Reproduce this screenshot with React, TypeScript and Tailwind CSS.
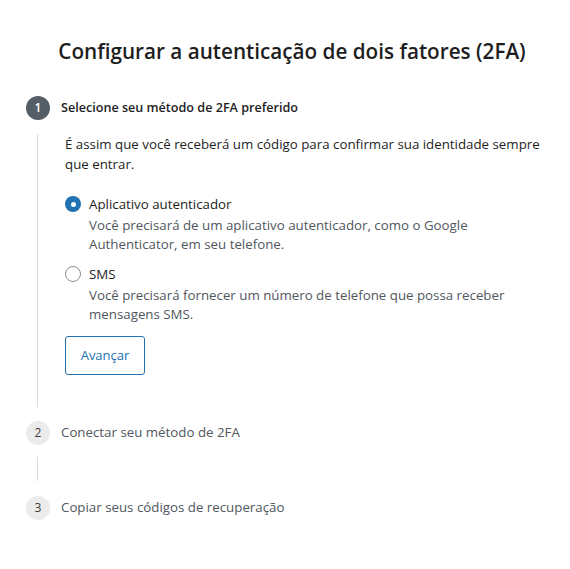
import React, { useState } from 'react';

const FONT = { fontFamily: '"Open Sans", "Noto Sans", Arial, sans-serif' };

const METHODS = [
  {
    id: 'app',
    label: 'Aplicativo autenticador',
    desc: 'Você precisará de um aplicativo autenticador, como o Google Authenticator, em seu telefone.',
  },
  {
    id: 'sms',
    label: 'SMS',
    desc: 'Você precisará fornecer um número de telefone que possa receber mensagens SMS.',
  },
];

function StepBadge({ n, active }: { n: number; active?: boolean }) {
  return (
    <div
      className={
        active
          ? 'w-6 h-6 rounded-full bg-[#555d66] text-white text-[12px] font-semibold flex items-center justify-center shrink-0'
          : 'w-6 h-6 rounded-full bg-[#ebebeb] text-[#3c3c3c] text-[12px] flex items-center justify-center shrink-0'
      }
    >
      {n}
    </div>
  );
}

export default function App() {
  const [method, setMethod] = useState('app');

  return (
    <div className="min-h-screen bg-white text-[#1e1e1e]" style={FONT}>
      <div className="pt-[36px] pl-[26px] pr-[12px]">
        <h1 className="text-[20.7px] leading-[30px] font-semibold text-center text-[#1e1e1e]">
          Configurar a autenticação de dois fatores (2FA)
        </h1>

        {/* Step 1 */}
        <div className="mt-[30px]">
          <div className="flex items-center gap-[11px]">
            <StepBadge n={1} active />
            <span className="text-[12.6px] font-semibold">Selecione seu método de 2FA preferido</span>
          </div>
          <div className="ml-[11px] mt-[14px] border-l border-[#dcdcdc] pl-[27px] pb-[32px] pr-[8px]">
            <p className="text-[13.3px] leading-5">
              É assim que você receberá um código para confirmar sua identidade sempre que entrar.
            </p>
            <div className="mt-5 flex flex-col gap-[10px]">
              {METHODS.map((m) => {
                const selected = method === m.id;
                return (
                  <label key={m.id} className="flex gap-2 cursor-pointer" onClick={() => setMethod(m.id)}>
                    <span className="pt-[2px]">
                      {selected ? (
                        <span className="w-4 h-4 rounded-full bg-[#2271b1] flex items-center justify-center">
                          <span className="w-[5px] h-[5px] rounded-full bg-white" />
                        </span>
                      ) : (
                        <span className="block w-4 h-4 rounded-full border border-[#8c8f94] bg-white" />
                      )}
                    </span>
                    <span className="flex flex-col">
                      <span className="text-[13.3px] leading-5">{m.label}</span>
                      <span className="text-[13.3px] leading-[19px] mt-[2px] text-[#50575e]">{m.desc}</span>
                    </span>
                  </label>
                );
              })}
            </div>
            <button className="mt-[12px] w-[80px] h-[39px] rounded-[3px] border border-[#2271b1] text-[#2271b1] text-[13px] bg-white">
              Avançar
            </button>
          </div>
        </div>

        {/* Step 2 */}
        <div className="mt-[14px]">
          <div className="flex items-center gap-[11px]">
            <StepBadge n={2} />
            <span className="text-[13.3px] text-[#50575e]">Conectar seu método de 2FA</span>
          </div>
          <div className="ml-[11px] mt-[12px] border-l border-[#dcdcdc] h-[24px]" />
        </div>

        {/* Step 3 */}
        <div className="mt-[15px]">
          <div className="flex items-center gap-[11px]">
            <StepBadge n={3} />
            <span className="text-[13.3px] text-[#50575e]">Copiar seus códigos de recuperação</span>
          </div>
        </div>
      </div>
    </div>
  );
}
